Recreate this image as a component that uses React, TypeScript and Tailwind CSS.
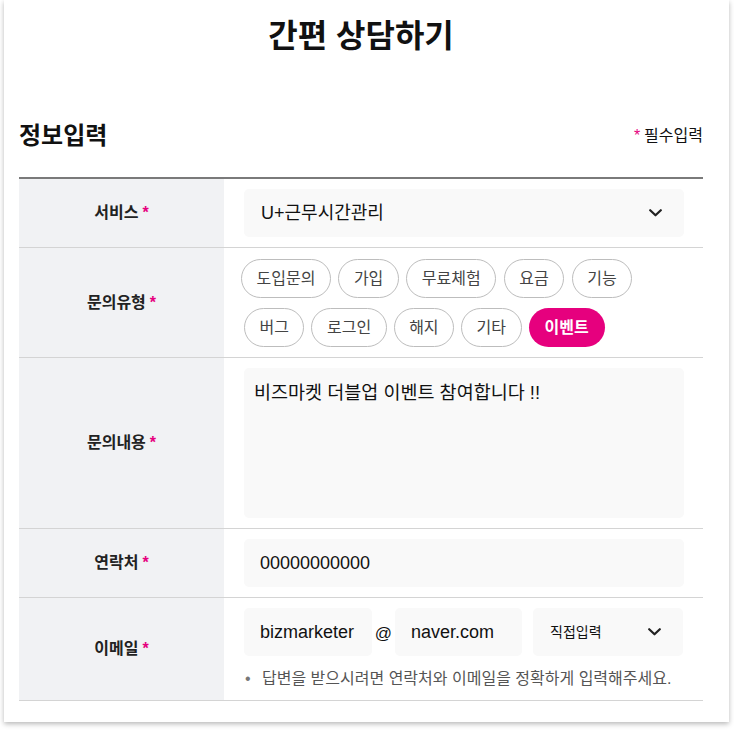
import React from "react";

const FONT = '"Liberation Sans","Noto Sans CJK KR",sans-serif';

function Chevron() {
  return (
    <svg width="13" height="8" viewBox="0 0 13 8" fill="none">
      <polyline points="1.2,1.2 6.5,6.3 11.8,1.2" stroke="#222" strokeWidth="2.2" strokeLinecap="round" strokeLinejoin="round" />
    </svg>
  );
}

function Label({ text }: { text: string }) {
  return (
    <div className="w-[205px] shrink-0 bg-[#f1f2f4] flex items-center justify-center text-[16px] font-bold text-[#222]">
      <span>{text}</span>
      <span className="ml-[4px] text-[#e6007e]">*</span>
    </div>
  );
}

function Chip({ text, active }: { text: string; active?: boolean }) {
  return (
    <div
      className={
        active
          ? "h-[39px] px-[16px] rounded-full bg-[#e6007e] text-white text-[16px] font-bold flex items-center"
          : "h-[39px] px-[14.5px] rounded-full border border-[#bdbdbd] text-[#444] text-[16px] flex items-center bg-white"
      }
    >
      {text}
    </div>
  );
}

export default function App() {
  return (
    <div className="w-[734px] h-[732px] bg-white overflow-hidden" style={{ fontFamily: FONT }}>
      <div className="ml-[4px] w-[725px] h-[722px] bg-white shadow-[0_2px_5px_rgba(0,0,0,0.28)] pl-[15px] pr-[26px]">
        <h1 className="pt-[14px] h-[58px] text-center text-[32px] leading-[44px] font-bold text-[#111]">간편 상담하기</h1>
        <div className="mt-[63px] h-[30px] flex items-center justify-between">
          <div className="text-[24px] font-bold text-[#111]">정보입력</div>
          <div className="text-[16px] text-[#111]">
            <span className="text-[#e6007e] mr-[4px]">*</span>필수입력
          </div>
        </div>
        <div className="mt-[26px] border-t-2 border-[#7a7a7a]">
          {/* 서비스 */}
          <div className="flex border-b border-[#d4d4d4]">
            <Label text="서비스" />
            <div className="flex-1 pl-[20px] pr-[19px] py-[10px]">
              <div className="h-[48px] rounded-[5px] bg-[#f9f9f9] flex items-center justify-between pl-[17px] pr-[22px] text-[18px] text-[#111]">
                <span>U+근무시간관리</span>
                <Chevron />
              </div>
            </div>
          </div>
          {/* 문의유형 */}
          <div className="flex border-b border-[#d4d4d4]">
            <Label text="문의유형" />
            <div className="flex-1 pl-[20px] pr-[19px] pt-[11px] pb-[10px] flex flex-col gap-[10px]">
              <div className="flex gap-[7.5px] ml-[-3px]">
                <Chip text="도입문의" />
                <Chip text="가입" />
                <Chip text="무료체험" />
                <Chip text="요금" />
                <Chip text="기능" />
              </div>
              <div className="flex gap-[7px]">
                <Chip text="버그" />
                <Chip text="로그인" />
                <Chip text="해지" />
                <Chip text="기타" />
                <Chip text="이벤트" active />
              </div>
            </div>
          </div>
          {/* 문의내용 */}
          <div className="flex border-b border-[#d4d4d4]">
            <Label text="문의내용" />
            <div className="flex-1 pl-[20px] pr-[19px] py-[10px]">
              <div className="h-[150px] rounded-[5px] bg-[#f9f9f9] pl-[10px] pt-[11px] text-[18.5px] leading-[28px] text-[#111]">
                비즈마켓 더블업 이벤트 참여합니다 !!
              </div>
            </div>
          </div>
          {/* 연락처 */}
          <div className="flex border-b border-[#d4d4d4]">
            <Label text="연락처" />
            <div className="flex-1 pl-[20px] pr-[19px] py-[10px]">
              <div className="h-[48px] rounded-[5px] bg-[#f9f9f9] flex items-center pl-[16px] text-[18px] text-[#111]">
                00000000000
              </div>
            </div>
          </div>
          {/* 이메일 */}
          <div className="flex border-b border-[#d4d4d4]">
            <Label text="이메일" />
            <div className="flex-1 pl-[20px] pr-[19px] pt-[10px] pb-[10px]">
              <div className="flex items-center">
                <div className="w-[128px] h-[48px] rounded-[5px] bg-[#f9f9f9] flex items-center pl-[16px] text-[18px] text-[#111]">
                  bizmarketer
                </div>
                <div className="w-[23px] pt-[4px] text-center text-[17px] text-[#111]">@</div>
                <div className="w-[127px] h-[48px] rounded-[5px] bg-[#f9f9f9] flex items-center pl-[16px] text-[18px] text-[#111]">
                  naver.com
                </div>
                <div className="ml-[11px] w-[150px] h-[48px] rounded-[5px] bg-[#f9f9f9] flex items-center justify-between pl-[17px] pr-[22px] text-[14px] text-[#111]">
                  <span>직접입력</span>
                  <Chevron />
                </div>
              </div>
              <div className="mt-[12px] leading-[22px] text-[16px] text-[#555] flex">
                <span className="w-[18px] pl-[1px] text-[#777]">•</span>
                <span>답변을 받으시려면 연락처와 이메일을 정확하게 입력해주세요.</span>
              </div>
            </div>
          </div>
        </div>
      </div>
    </div>
  );
}
